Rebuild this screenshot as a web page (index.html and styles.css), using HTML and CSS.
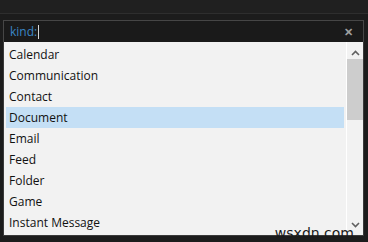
FILE: index.html
```html
<!DOCTYPE html>
<html lang="en">
<head>
    <meta charset="UTF-8">
    <title>Search kinds</title>
    <link rel="stylesheet" href="styles.css">
</head>
<body>
    <div class="topbar"></div>
    <div class="panel">
        <div class="search">
            <span class="query">kind:</span><span class="caret"></span>
            <span class="clear">&#x2715;</span>
        </div>
        <div class="dropdown">
            <ul class="list">
                <li>Calendar</li>
                <li>Communication</li>
                <li>Contact</li>
                <li class="selected">Document</li>
                <li>Email</li>
                <li>Feed</li>
                <li>Folder</li>
                <li>Game</li>
                <li>Instant Message</li>
            </ul>
            <div class="scrollbar">
                <svg class="arrow" width="9" height="6" viewBox="0 0 9 6"><path d="M1 5 L4.5 1.5 L8 5" fill="none" stroke="#606060" stroke-width="1.6"/></svg>
                <div class="track"><div class="thumb"></div></div>
                <svg class="arrow" width="9" height="6" viewBox="0 0 9 6"><path d="M1 1 L4.5 4.5 L8 1" fill="none" stroke="#606060" stroke-width="1.6"/></svg>
            </div>
        </div>
        <span class="mark">wsxdn.com</span>
    </div>
</body>
</html>
```

FILE: styles.css
```css
body {
    margin: 0;
    background: #1c1c1c;
    font-family: "Open Sans", "Noto Sans", sans-serif;
    font-size: 12px;
    height: 242px;
    overflow: hidden;
}

.topbar {
    height: 13px;
    background: #202020;
    border-bottom: 1px solid #2e2e2e;
}

.panel {
    position: relative;
    margin: 6px 4px 0 3px;
}

.search {
    display: flex;
    align-items: center;
    height: 21px;
    padding: 0 10px 0 6px;
    background: #1a1a1a;
    border: 1px solid #464646;
    border-bottom: none;
}

.query {
    color: #3b86c4;
    font-size: 12px;
}

.caret {
    width: 1px;
    height: 14px;
    background: #d8d8d8;
    margin-left: 1px;
}

.clear {
    margin-left: auto;
    color: #a0a0a0;
    font-size: 11px;
    font-weight: bold;
}

.dropdown {
    display: flex;
    background: #f2f2f2;
    height: 193px;
    border-left: 1px solid #3a3a3a;
    border-right: 1px solid #3a3a3a;
    border-bottom: 1px solid #3a3a3a;
}

.list {
    list-style: none;
    margin: 2px 0 0 2px;
    padding: 0;
    flex: 1;
}

.list li {
    height: 21px;
    line-height: 21px;
    padding-left: 3px;
    color: #111;
}

.list li.selected {
    background: #c4dff5;
}

.scrollbar {
    width: 16px;
    margin-left: 2px;
    border-left: 1px solid #ffffff;
    display: flex;
    flex-direction: column;
    align-items: center;
    padding-top: 8px;
}

.track {
    flex: 1;
    width: 100%;
    padding: 3px 1px;
}

.thumb {
    height: 61px;
    background: #cdcdcd;
}

.arrow {
    display: block;
}

.scrollbar .arrow:last-child {
    margin-bottom: 7px;
}

.mark {
    position: absolute;
    right: 10px;
    bottom: -5px;
    font-family: "DejaVu Sans", sans-serif;
    font-size: 14px;
    color: #1a1a1a;
}
```
